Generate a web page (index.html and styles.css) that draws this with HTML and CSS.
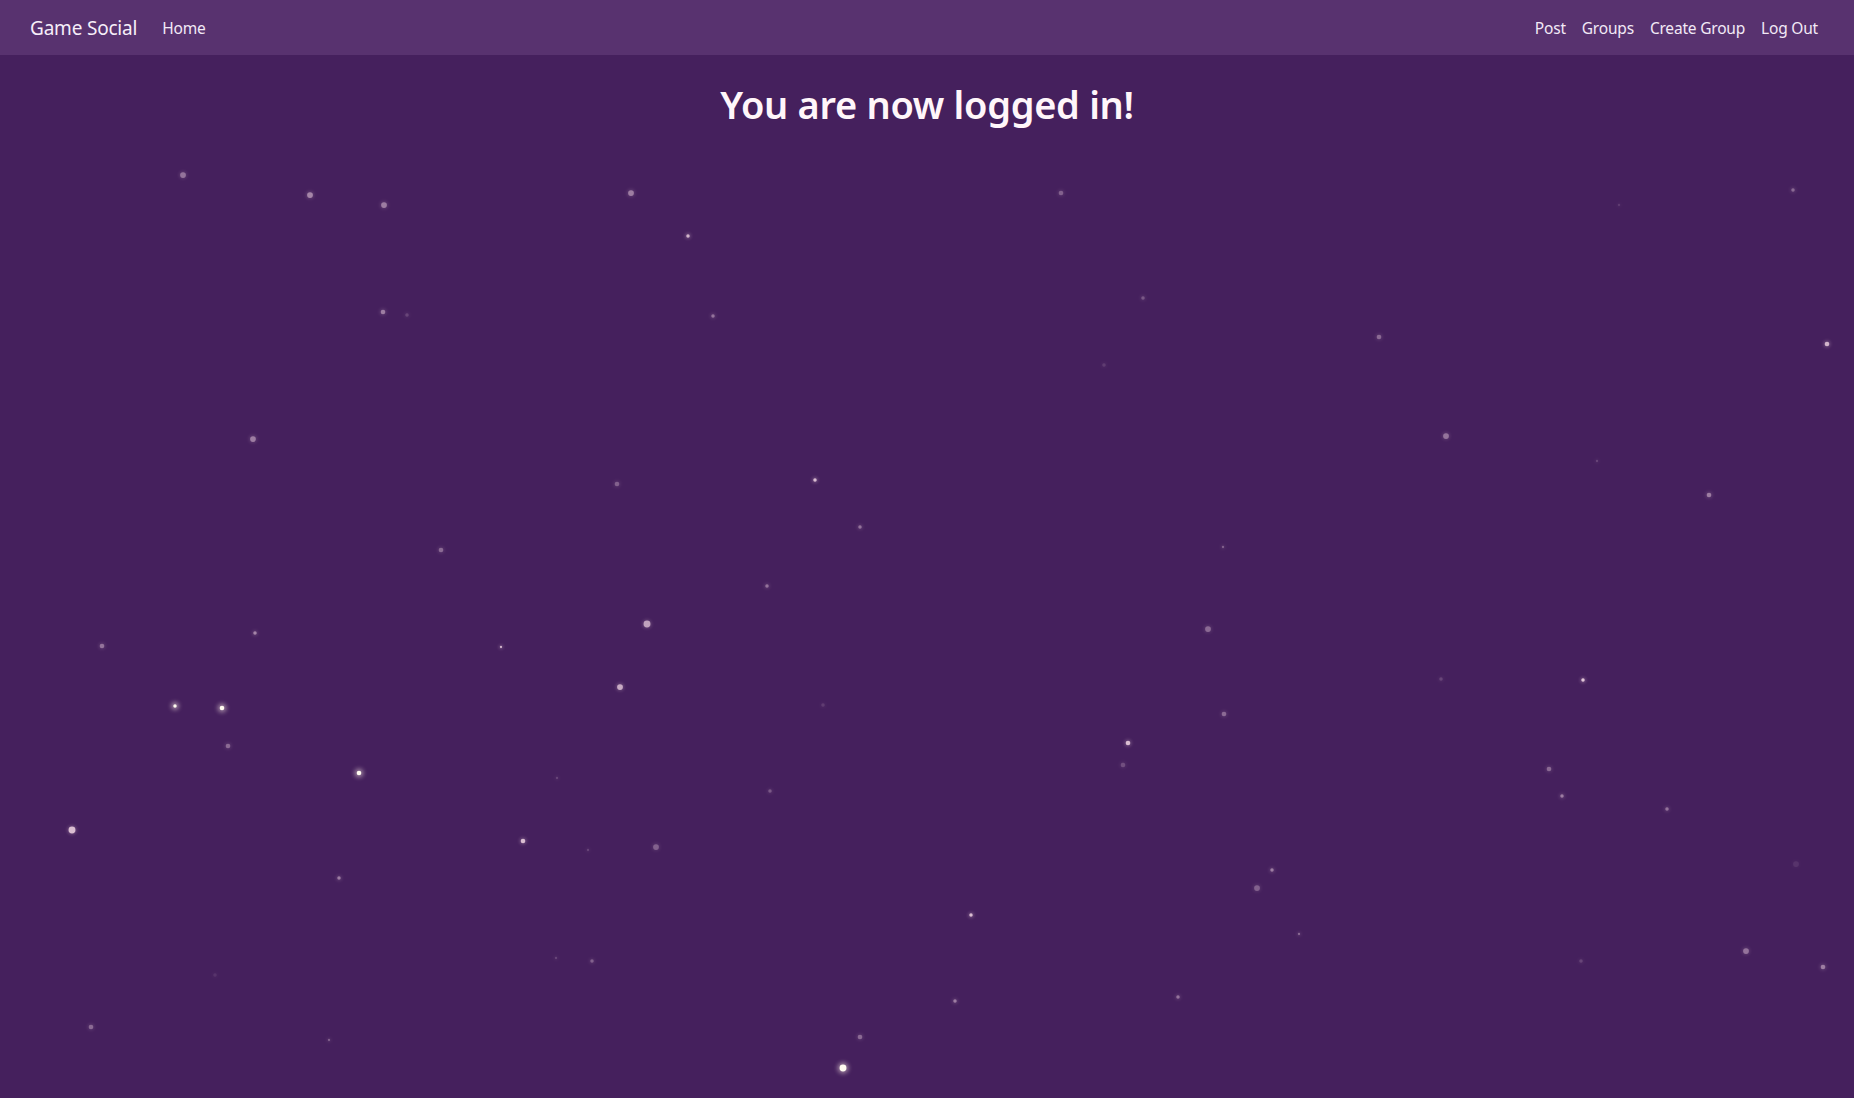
FILE: index.html
```html
<!DOCTYPE html>
<html lang="en">
<head>
<meta charset="utf-8">
<title>Game Social</title>
<link rel="stylesheet" href="styles.css">
</head>
<body>
<nav class="navbar">
  <div class="nav-left">
    <a class="brand" href="#">Game Social</a>
    <a class="nav-link" href="#">Home</a>
  </div>
  <div class="nav-right">
    <a class="nav-link" href="#">Post</a>
    <a class="nav-link" href="#">Groups</a>
    <a class="nav-link" href="#">Create Group</a>
    <a class="nav-link" href="#">Log Out</a>
  </div>
</nav>
<main class="content">
  <h1 class="title">You are now logged in!</h1>
</main>
<div class="sky">
  <span class="star" style="left:183px;top:175px;width:5px;height:5px;opacity:.45"></span>
  <span class="star" style="left:310px;top:195px;width:5px;height:5px;opacity:.55"></span>
  <span class="star" style="left:384px;top:205px;width:5px;height:5px;opacity:.5"></span>
  <span class="star" style="left:631px;top:193px;width:5px;height:5px;opacity:.5"></span>
  <span class="star" style="left:688px;top:236px;width:3px;height:3px;opacity:.8"></span>
  <span class="star" style="left:1061px;top:193px;width:4px;height:4px;opacity:.35"></span>
  <span class="star" style="left:1793px;top:190px;width:3px;height:3px;opacity:.4"></span>
  <span class="star" style="left:383px;top:312px;width:4px;height:4px;opacity:.5"></span>
  <span class="star" style="left:407px;top:315px;width:3px;height:3px;opacity:.2"></span>
  <span class="star" style="left:713px;top:316px;width:3px;height:3px;opacity:.45"></span>
  <span class="star" style="left:1143px;top:298px;width:3px;height:3px;opacity:.3"></span>
  <span class="star" style="left:1379px;top:337px;width:4px;height:4px;opacity:.4"></span>
  <span class="star" style="left:1827px;top:344px;width:4px;height:4px;opacity:.8"></span>
  <span class="star" style="left:1104px;top:365px;width:3px;height:3px;opacity:.15"></span>
  <span class="star" style="left:253px;top:439px;width:5px;height:5px;opacity:.5"></span>
  <span class="star" style="left:1446px;top:436px;width:5px;height:5px;opacity:.45"></span>
  <span class="star" style="left:617px;top:484px;width:4px;height:4px;opacity:.35"></span>
  <span class="star" style="left:815px;top:480px;width:3px;height:3px;opacity:.85"></span>
  <span class="star" style="left:860px;top:527px;width:3px;height:3px;opacity:.45"></span>
  <span class="star" style="left:1709px;top:495px;width:4px;height:4px;opacity:.5"></span>
  <span class="star" style="left:1597px;top:461px;width:2px;height:2px;opacity:.2"></span>
  <span class="star" style="left:441px;top:550px;width:4px;height:4px;opacity:.4"></span>
  <span class="star" style="left:1223px;top:547px;width:2px;height:2px;opacity:.35"></span>
  <span class="star" style="left:767px;top:586px;width:3px;height:3px;opacity:.45"></span>
  <span class="star" style="left:102px;top:646px;width:4px;height:4px;opacity:.45"></span>
  <span class="star" style="left:255px;top:633px;width:3px;height:3px;opacity:.55"></span>
  <span class="star" style="left:647px;top:624px;width:6px;height:6px;opacity:.7"></span>
  <span class="star" style="left:501px;top:647px;width:2px;height:2px;opacity:.8"></span>
  <span class="star" style="left:1208px;top:629px;width:5px;height:5px;opacity:.4"></span>
  <span class="star" style="left:1441px;top:679px;width:3px;height:3px;opacity:.2"></span>
  <span class="star" style="left:1583px;top:680px;width:3px;height:3px;opacity:.9"></span>
  <span class="star" style="left:620px;top:687px;width:5px;height:5px;opacity:.75"></span>
  <span class="star bright" style="left:175px;top:706px;width:3px;height:3px;opacity:1"></span>
  <span class="star bright" style="left:222px;top:708px;width:4px;height:4px;opacity:1"></span>
  <span class="star" style="left:228px;top:746px;width:4px;height:4px;opacity:.4"></span>
  <span class="star" style="left:1224px;top:714px;width:4px;height:4px;opacity:.4"></span>
  <span class="star bright" style="left:359px;top:773px;width:4px;height:4px;opacity:1"></span>
  <span class="star" style="left:1128px;top:743px;width:4px;height:4px;opacity:.85"></span>
  <span class="star" style="left:1123px;top:765px;width:4px;height:4px;opacity:.25"></span>
  <span class="star" style="left:1549px;top:769px;width:4px;height:4px;opacity:.4"></span>
  <span class="star" style="left:1562px;top:796px;width:3px;height:3px;opacity:.5"></span>
  <span class="star" style="left:1667px;top:809px;width:3px;height:3px;opacity:.45"></span>
  <span class="star" style="left:770px;top:791px;width:3px;height:3px;opacity:.3"></span>
  <span class="star" style="left:557px;top:778px;width:2px;height:2px;opacity:.2"></span>
  <span class="star" style="left:72px;top:830px;width:6px;height:6px;opacity:.85"></span>
  <span class="star" style="left:523px;top:841px;width:4px;height:4px;opacity:.85"></span>
  <span class="star" style="left:656px;top:847px;width:5px;height:5px;opacity:.35"></span>
  <span class="star" style="left:588px;top:850px;width:2px;height:2px;opacity:.2"></span>
  <span class="star" style="left:339px;top:878px;width:3px;height:3px;opacity:.5"></span>
  <span class="star" style="left:1272px;top:870px;width:3px;height:3px;opacity:.5"></span>
  <span class="star" style="left:1257px;top:888px;width:5px;height:5px;opacity:.35"></span>
  <span class="star" style="left:971px;top:915px;width:3px;height:3px;opacity:.85"></span>
  <span class="star" style="left:1299px;top:934px;width:2px;height:2px;opacity:.4"></span>
  <span class="star" style="left:1746px;top:951px;width:5px;height:5px;opacity:.45"></span>
  <span class="star" style="left:1823px;top:967px;width:4px;height:4px;opacity:.5"></span>
  <span class="star" style="left:592px;top:961px;width:3px;height:3px;opacity:.35"></span>
  <span class="star" style="left:556px;top:958px;width:2px;height:2px;opacity:.2"></span>
  <span class="star" style="left:1581px;top:961px;width:3px;height:3px;opacity:.2"></span>
  <span class="star" style="left:955px;top:1001px;width:3px;height:3px;opacity:.5"></span>
  <span class="star" style="left:1178px;top:997px;width:3px;height:3px;opacity:.45"></span>
  <span class="star" style="left:91px;top:1027px;width:4px;height:4px;opacity:.4"></span>
  <span class="star" style="left:329px;top:1040px;width:2px;height:2px;opacity:.35"></span>
  <span class="star" style="left:860px;top:1037px;width:4px;height:4px;opacity:.4"></span>
  <span class="star bright" style="left:843px;top:1068px;width:6px;height:6px;opacity:1"></span>
  <span class="star" style="left:1796px;top:864px;width:5px;height:5px;opacity:.1"></span>
  <span class="star" style="left:1619px;top:205px;width:2px;height:2px;opacity:.15"></span>
  <span class="star" style="left:823px;top:705px;width:3px;height:3px;opacity:.15"></span>
  <span class="star" style="left:215px;top:975px;width:3px;height:3px;opacity:.1"></span>
</div>
</body>
</html>
```

FILE: styles.css
```css
html, body {
  margin: 0;
  padding: 0;
  height: 100%;
}

body {
  background: #45205d;
  color: #fdf3f8;
  font-family: "Noto Sans", "Open Sans", "DejaVu Sans", sans-serif;
  overflow: hidden;
  position: relative;
}

.navbar {
  position: relative;
  z-index: 2;
  height: 55px;
  background: #58326f;
  display: flex;
  align-items: center;
  justify-content: space-between;
  padding: 0 28px 0 30px;
  box-sizing: border-box;
}

.nav-left,
.nav-right {
  display: flex;
  align-items: center;
}

.brand {
  color: #f6eef9;
  text-decoration: none;
  font-size: 19px;
  margin-right: 17px;
  letter-spacing: -0.2px;
}

.nav-link {
  color: #f2e9f6;
  text-decoration: none;
  font-size: 15.5px;
  padding: 0 8px;
  letter-spacing: -0.2px;
}

.content {
  position: relative;
  z-index: 2;
  display: flex;
  justify-content: center;
}

.title {
  margin: 23px 0 0;
  font-size: 38px;
  font-weight: 600;
  letter-spacing: -0.3px;
  color: #fff6fa;
}

.sky {
  position: absolute;
  inset: 0;
  z-index: 1;
  pointer-events: none;
}

.star {
  position: absolute;
  border-radius: 50%;
  background: #f4d9e6;
  transform: translate(-50%, -50%) scale(1.15);
  box-shadow: 0 0 3px 1px rgba(244, 217, 230, 0.3);
}

.star.bright {
  background: #fffaf0;
  box-shadow: 0 0 4px 2px rgba(255, 240, 230, 0.45);
}
```
